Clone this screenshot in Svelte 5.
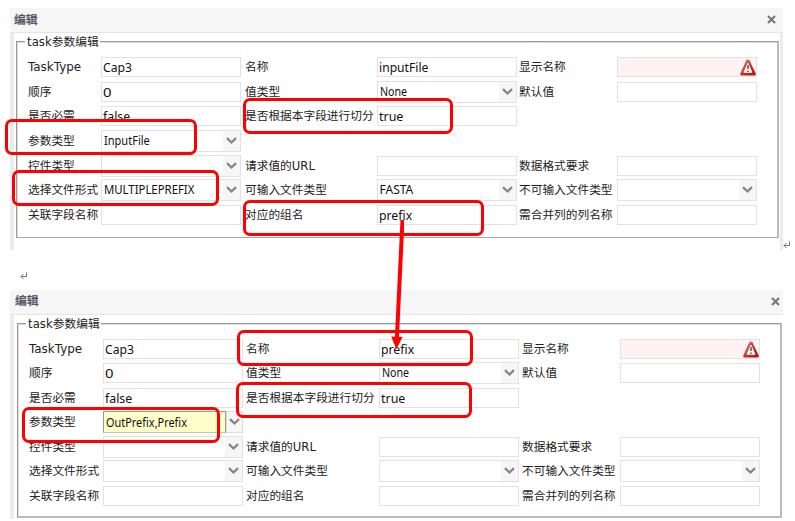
<script>
  const makeRows = (filled) => [
    [
      { label: 'TaskType', value: 'Cap3' },
      { label: '名称', value: filled ? 'inputFile' : 'prefix' },
      { label: '显示名称', invalid: true },
    ],
    [
      { label: '顺序', value: '0' },
      { label: '值类型', value: 'None', combo: true },
      { label: '默认值' },
    ],
    [
      { label: '是否必需', value: 'false' },
      { label: '是否根据本字段进行切分', value: 'true' },
      null,
    ],
    [
      { label: '参数类型', value: filled ? 'InputFile' : 'OutPrefix,Prefix', combo: true, active: !filled },
      null,
      null,
    ],
    [
      { label: '控件类型', combo: true },
      { label: '请求值的URL' },
      { label: '数据格式要求' },
    ],
    [
      { label: '选择文件形式', value: filled ? 'MULTIPLEPREFIX' : '', combo: true },
      { label: '可输入文件类型', value: filled ? 'FASTA' : '', combo: true },
      { label: '不可输入文件类型', combo: true },
    ],
    [
      { label: '关联字段名称' },
      { label: '对应的组名', value: filled ? 'prefix' : '' },
      { label: '需合并列的列名称' },
    ],
  ];

  const dialogs = [
    { name: 'first', rows: makeRows(true) },
    { name: 'second', rows: makeRows(false) },
  ];

  const widths = {
    TaskType: 53, Cap3: 29, inputFile: 49.5, '0': 8, None: 27.5, 'false': 27.5, 'true': 24,
    InputFile: 46, MULTIPLEPREFIX: 90, FASTA: 34, prefix: 33, 'OutPrefix,Prefix': 81,
  };

  // Scale each latin caption horizontally to the dialog's condensed metrics.
  function fit(node, text) {
    const apply = (t) => {
      node.style.transform = 'none';
      const natural = node.offsetWidth;
      if (widths[t] && natural) node.style.transform = `scaleX(${widths[t] / natural})`;
    };
    apply(text);
    return { update: apply };
  }
</script>

{#snippet returnMark()}
  <svg width="8" height="8" viewBox="0 0 8 8" fill="none" stroke="#777" stroke-width="1">
    <path d="M6.5 .5V4.5H1M3.5 2L1 4.5L3.5 7" />
  </svg>
{/snippet}

<main>
  {#each dialogs as dialog}
    <section class="dialog {dialog.name}">
      <header>
        <h2>编辑</h2>
        <svg class="close" width="9" height="9" viewBox="0 0 9 9" stroke="#777" stroke-width="2.2">
          <path d="M1 1L8 8M8 1L1 8" />
        </svg>
      </header>
      <div class="body">
        <div class="group">
          <div class="legend">task参数编辑</div>
          <div class="form">
            {#each dialog.rows as row}
              {#each row as field}
                {#if field}
                  <div class="label"><span class="text" use:fit={field.label}>{field.label}</span></div>
                  <div class="field" class:combo={field.combo} class:invalid={field.invalid} class:active={field.active}>
                    <div class="value">
                      {#if field.value}<span class="text" use:fit={field.value}>{field.value}</span>{/if}
                    </div>
                    {#if field.combo}
                      <div class="trigger">
                        <svg width="11" height="8" viewBox="0 0 11 8" fill="none" stroke="#858585" stroke-width="2.3">
                          <path d="M1 1.2L5.5 5.5L10 1.2" />
                        </svg>
                      </div>
                    {/if}
                    {#if field.invalid}
                      <svg class="warning" width="16" height="17" viewBox="0 0 16 17">
                        <defs>
                          <linearGradient id="red-{dialog.name}" x1="0" y1="0" x2="1" y2="1">
                            <stop offset="0" stop-color="#d98a86" />
                            <stop offset=".5" stop-color="#c9352e" />
                            <stop offset="1" stop-color="#9c1712" />
                          </linearGradient>
                        </defs>
                        <path d="M6.3 1.2Q8 -.4 9.5 1.4L15.5 14Q16.2 16.4 14.4 16.4H1.5Q-.2 16.4 .5 14Z" fill="url(#red-{dialog.name})" />
                        <path d="M7.9 4.3L11.9 13.3H3.9Z" fill="#f8f4f3" stroke="#f8f4f3" stroke-linejoin="round" />
                        <path d="M8 6V10M8 11.5V13" stroke="#555" stroke-width="1.5" />
                      </svg>
                    {/if}
                  </div>
                {:else}
                  <div></div><div></div>
                {/if}
              {/each}
            {/each}
          </div>
        </div>
      </div>
    </section>
    {#if dialog.name === 'first'}
      <div class="between">{@render returnMark()}</div>
    {/if}
  {/each}

  <div class="end-mark">{@render returnMark()}</div>
  <div class="mark split-one"></div>
  <div class="mark type-one"></div>
  <div class="mark form-one"></div>
  <div class="mark group-one"></div>
  <div class="mark name-two"></div>
  <div class="mark split-two"></div>
  <div class="mark type-two"></div>
  <svg class="arrow" width="14" height="130" viewBox="0 0 14 130">
    <path d="M12.5 0L6.8 120" stroke="#f00" stroke-width="4" />
    <path d="M1.2 116.5L12.6 117L6.4 129Z" fill="#f00" />
  </svg>
</main>

<style>
  :global(body) { background: #fff; }
  main {
    position: relative;
    box-sizing: border-box;
    width: 795px;
    height: 521px;
    overflow: hidden;
    padding: 8px 0 0 10px;
    font: 11.7px/16px "DejaVu Sans", "Noto Sans CJK SC", sans-serif;
    color: #222;
  }
  .dialog {
    box-sizing: border-box;
    display: flex;
    flex-direction: column;
    width: 773px;
    background: #ececec;
  }
  .first { height: 242px; }
  .second { height: 229px; }
  header {
    box-sizing: border-box;
    display: flex;
    align-items: center;
    justify-content: space-between;
    flex: none;
    height: 25px;
    padding: 0 7px 2px 4px;
    background: #f6f6f6;
    border-bottom: 1px solid #e5e5e5;
  }
  .first header { padding-bottom: 1px; }
  .second header { padding: 0 3px 2px 5px; }
  h2 {
    margin: 0;
    font-size: 11.8px;
    line-height: 16px;
    font-weight: 500;
    color: #505562;
    -webkit-text-stroke: .25px #505562;
  }
  .body {
    flex: 1;
    margin: 0 3px 0 4px;
    padding: 8px 1px 0 2px;
    background: #fff;
  }
  .second .body { margin-right: 0; padding: 8px 1px 0 3px; }
  .group {
    box-sizing: border-box;
    display: flex;
    flex-direction: column;
    height: 197px;
    border: 1px solid #999;
    border-right: 2px solid #bbb;
    border-bottom-color: #aaa;
    box-shadow: inset 1px 1px #ddd;
  }
  .second .group { height: 195px; border-bottom: 2px solid #bbb; }
  .legend {
    align-self: flex-start;
    width: 72px;
    height: 16px;
    line-height: 16px;
    margin: -8px 0 4.45px 8px;
    padding: 0 1px 0 2px;
    background: #fff;
    white-space: nowrap;
    letter-spacing: .05px;
  }
  .form {
    display: grid;
    grid-template-columns: 73px 144px 132px 142px 98px 140px;
    grid-auto-rows: 24.72px;
    align-items: center;
    padding-left: 11px;
  }
  .second .form {
    grid-template-columns: 74px 143px 133px 143px 98px 140px;
    grid-auto-rows: 24.5px;
  }
  .label { white-space: nowrap; }
  .text { display: inline-block; transform-origin: left center; }
  .field {
    box-sizing: border-box;
    position: relative;
    display: flex;
    width: 140px;
    height: 20px;
    border: 1px solid #e2e2e2;
    background: #fff;
  }
  .combo { height: 22px; }
  .value {
    flex: 1;
    display: flex;
    align-items: center;
    padding-left: .5px;
    font: 13px/18px "Noto Sans", "Noto Sans CJK SC", sans-serif;
    color: #111;
  }
  .combo .value { padding-left: 1.5px; font-size: 12px; }
  .trigger {
    display: flex;
    align-items: center;
    justify-content: center;
    width: 17px;
    background: #f6f6f6;
  }
  .invalid { background: #fff2f2; }
  .warning { position: absolute; right: 0; top: 1px; }
  .active { border: none; }
  .active .value { background: #ffffca; border: 1px solid #999; border-bottom-color: #c5c5a8; padding-top: 1px; }
  .active .trigger { border: 1px solid #ddd; width: 15px; }
  .between { box-sizing: border-box; height: 40px; padding: 22px 0 0 10px; line-height: 0; }
  .end-mark { position: absolute; left: 783px; top: 241px; line-height: 0; }
  .mark {
    position: absolute;
    box-sizing: border-box;
    height: 36px;
    border: 3px solid #f00;
    border-radius: 7px;
  }
  .split-one { left: 243px; top: 98px; width: 210px; }
  .type-one { left: 5px; top: 119px; width: 192px; }
  .form-one { left: 12px; top: 170px; width: 207px; }
  .group-one { left: 243px; top: 200px; width: 241px; }
  .name-two { left: 237px; top: 330px; width: 236px; }
  .split-two { left: 236px; top: 382px; width: 236px; }
  .type-two { left: 22px; top: 407px; width: 198px; }
  .arrow { position: absolute; left: 390px; top: 220px; }
</style>
